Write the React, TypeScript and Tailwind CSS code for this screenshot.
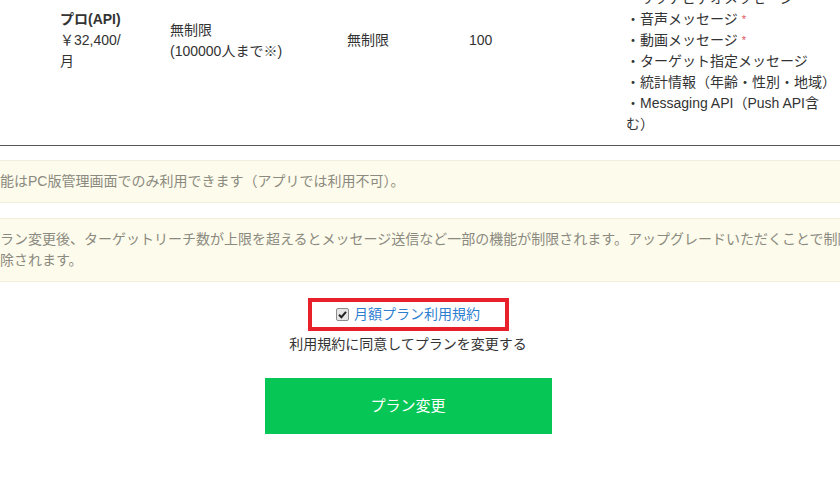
import React from "react";

const font = "font-['Liberation_Sans','Noto_Sans_CJK_JP',sans-serif]";

const Star = () => <span className="text-[#e0535a] text-[11px] align-top ml-[4px]">*</span>;

const features: React.ReactNode[] = [
    "・タイムライン投稿",
    "・リッチメッセージ",
    "・リッチビデオメッセージ",
    <>・音声メッセージ<Star /></>,
    <>・動画メッセージ<Star /></>,
    "・ターゲット指定メッセージ",
    "・統計情報（年齢・性別・地域）",
    "・Messaging API（Push API含",
    "む）",
];

const PlanRow = () => (
    <div className="flex items-center py-[10px] border-b border-[#555] text-[14px] leading-[21px] text-[#333] mt-[-64px]">
        <div className="w-[90px] shrink-0" />
        <div className="w-[110px] shrink-0">
            <div className="w-[70px]">
                <div className="font-bold">プロ(API)</div>
                <div>￥32,400/月</div>
            </div>
        </div>
        <div className="w-[177px] shrink-0">
            無制限
            <br />
            (100000人まで※)
        </div>
        <div className="w-[122px] shrink-0">無制限</div>
        <div className="w-[157px] shrink-0">100</div>
        <div className="w-[220px] shrink-0 whitespace-nowrap">
            {features.map((f, i) => (
                <div key={i}>{f}</div>
            ))}
        </div>
    </div>
);

const Notice = ({ children }: { children: React.ReactNode }) => (
    <div className="w-[1000px] bg-[#fdfbeb] border border-[#f1eedb] px-[15px] py-[10px] text-[14px] leading-[21px] text-[#8b8a80] whitespace-nowrap">
        {children}
    </div>
);

const Checkbox = () => (
    <span className="relative inline-flex w-[13px] h-[13px]">
        <input
            type="checkbox"
            defaultChecked
            className="appearance-none w-[13px] h-[13px] m-0 border border-[#8d8d8d] rounded-[2px] bg-[#e6e6e6]"
        />
        <svg viewBox="0 0 13 13" className="absolute inset-0 w-[13px] h-[13px] pointer-events-none">
            <path d="M3 6.8 L5.4 9.2 L10 3.8" fill="none" stroke="#222" strokeWidth="2" />
        </svg>
    </span>
);

export default function App() {
    return (
        <div className={`w-[840px] h-[500px] overflow-hidden bg-white ${font}`}>
            <div className="ml-[-30px] w-[876px]">
                <PlanRow />

                <div className="mt-[14px]">
                    <Notice>機能はPC版管理画面でのみ利用できます（アプリでは利用不可）。</Notice>
                </div>
                <div className="mt-[15px]">
                    <Notice>
                        プラン変更後、ターゲットリーチ数が上限を超えるとメッセージ送信など一部の機能が制限されます。アップグレードいただくことで制限が
                        <br />
                        解除されます。
                    </Notice>
                </div>

                <div className="flex flex-col items-center mt-[16px]">
                    <div className="border-4 border-[#e8202a] w-[201px] h-[33px] flex items-center justify-center">
                        <label className="flex items-center gap-[5px] text-[14px] leading-[21px] text-[#2f7fd1]">
                            <Checkbox />
                            <span>月額プラン利用規約</span>
                        </label>
                    </div>
                    <p className="mt-[3px] text-[14px] leading-[21px] text-[#333]">
                        利用規約に同意してプランを変更する
                    </p>
                </div>
                <div className="flex justify-center">
                    <button className="mt-[23px] w-[287px] h-[56px] bg-[#06c755] text-white text-[15px]">
                        プラン変更
                    </button>
                </div>
            </div>
        </div>
    );
}
